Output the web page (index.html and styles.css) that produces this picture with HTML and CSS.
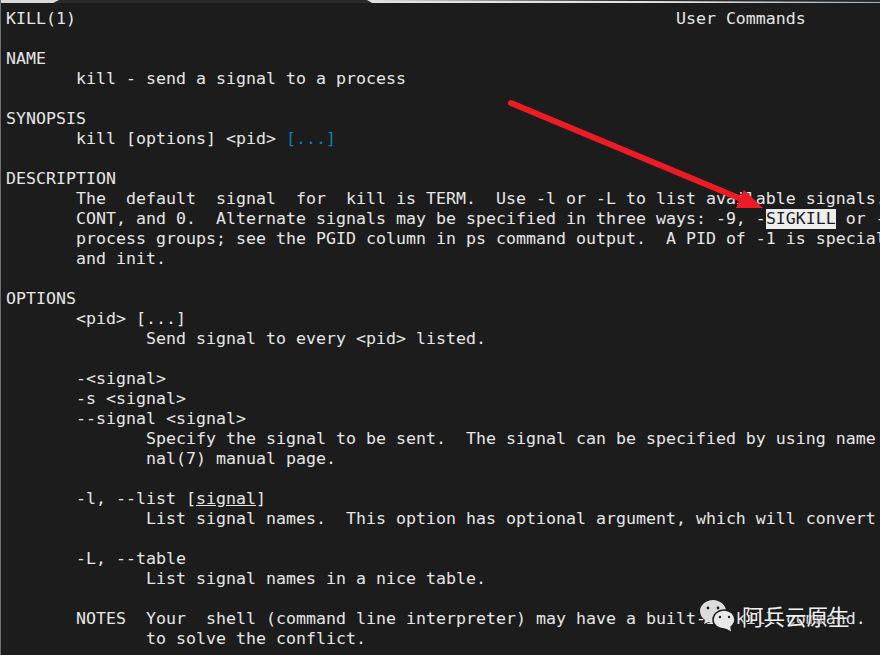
FILE: index.html
```html
<!DOCTYPE html>
<html lang="en">
<head>
<meta charset="utf-8">
<title>kill(1)</title>
<link rel="stylesheet" href="styles.css">
</head>
<body>
<main class="terminal">
<div class="topbar"><span class="tab tab-left"></span><span class="tab tab-right"></span></div>
<pre class="man">KILL(1)                                                            User Commands

NAME
       kill - send a signal to a process

SYNOPSIS
       kill [options] &lt;pid&gt; <span class="link">[...]</span>

DESCRIPTION
       The  default  signal  for  kill is TERM.  Use -l or -L to list available signals.  Particularly
       CONT, and 0.  Alternate signals may be specified in three ways: -9, -<span class="hit">SIGKILL</span> or -KILL.
       process groups; see the PGID column in ps command output.  A PID of -1 is special; it indicates
       and init.

OPTIONS
       &lt;pid&gt; [...]
              Send signal to every &lt;pid&gt; listed.

       -&lt;signal&gt;
       -s &lt;signal&gt;
       --signal &lt;signal&gt;
              Specify the signal to be sent.  The signal can be specified by using name or number.
              nal(7) manual page.

       -l, --list [<span class="under">signal</span>]
              List signal names.  This option has optional argument, which will convert
              
       -L, --table
              List signal names in a nice table.

       NOTES  Your  shell (command line interpreter) may have a built-in kill command.
              to solve the conflict.</pre>
<svg class="arrow" viewBox="0 0 880 655" aria-hidden="true">
<path class="arrow-shaft" d="M510 103 L745 201"/>
<path class="arrow-head" d="M743 190 L762 208 L735 208 Z"/>
</svg>
<div class="mark">
<svg class="mark-icon" viewBox="0 0 35 34" aria-hidden="true">
<path class="bubble" d="M13 0 C6 0 0 5 0 11 C0 15 2 18 5 20 L4 24 L9 22 C11 23 12 23 14 23 C21 23 26 18 26 11 C26 5 20 0 13 0 Z"/>
<circle class="eye" cx="8" cy="8" r="1.4"/><circle class="eye" cx="18" cy="8" r="1.4"/>
<path class="bubble front" d="M24 10 C18 10 13 14 13 20 C13 25 18 29 24 29 L27 30 L32 33 L31 27 C33 25 35 23 35 20 C35 14 30 10 24 10 Z"/>
<circle class="eye" cx="20" cy="17" r="1.2"/><circle class="eye" cx="29" cy="17" r="1.2"/>
</svg>
<span class="mark-text">阿兵云原生</span>
</div>
</main>
</body>
</html>
```
FILE: styles.css
```css
html, body {
  margin: 0;
  padding: 0;
  background: #1c1c1c;
}
.terminal {
  position: relative;
  width: 880px;
  height: 655px;
  overflow: hidden;
  background: #1c1c1c;
  border-left: 1px solid #6f6f6f;
  box-sizing: border-box;
}
.topbar {
  height: 3px;
  display: flex;
  justify-content: space-between;
  background: #2a2a2a;
}
.tab { display: block; height: 3px; background: #d9d9d9; }
.tab-left { width: 58px; clip-path: polygon(0 0, 100% 0, 90% 100%, 0 100%); }
.tab-right {
  width: 513px;
  background: linear-gradient(to right, #e2e2e2 60%, #a3b2c0);
  clip-path: polygon(0 0, 100% 2px, 100% 100%, 1% 100%);
}
.man {
  margin: 0;
  padding: 6px 0 0 5px;
  font-family: "DejaVu Sans Mono", monospace;
  font-size: 16.6px;
  letter-spacing: 0.008px;
  line-height: 20px;
  color: #e6e6e6;
  white-space: pre;
}
.link { color: #0e7fb0; }
.hit { display: inline-block; height: 20px; background: #eeeeee; color: #1c1c1c; }
.under { text-decoration: underline; }
.arrow {
  position: absolute;
  left: 0;
  top: 0;
  width: 880px;
  height: 655px;
}
.arrow-shaft { stroke: #ed1c24; stroke-width: 6; stroke-linecap: round; fill: none; }
.arrow-head { fill: #ed1c24; }
.mark {
  position: absolute;
  left: 699px;
  top: 600px;
  display: flex;
  align-items: center;
  gap: 7px;
}
.mark-icon { width: 35px; height: 34px; }
.bubble { fill: #dcdcdc; }
.bubble.front { stroke: #1c1c1c; stroke-width: 1.5; fill: #e8e8e8; }
.eye { fill: #222222; }
.mark-text {
  padding-bottom: 2px;
  font-family: "Noto Sans CJK SC", sans-serif;
  font-size: 21.5px;
  line-height: 28px;
  color: #f2f2f2;
  text-shadow: 0 0 2px #1c1c1c;
}
```
